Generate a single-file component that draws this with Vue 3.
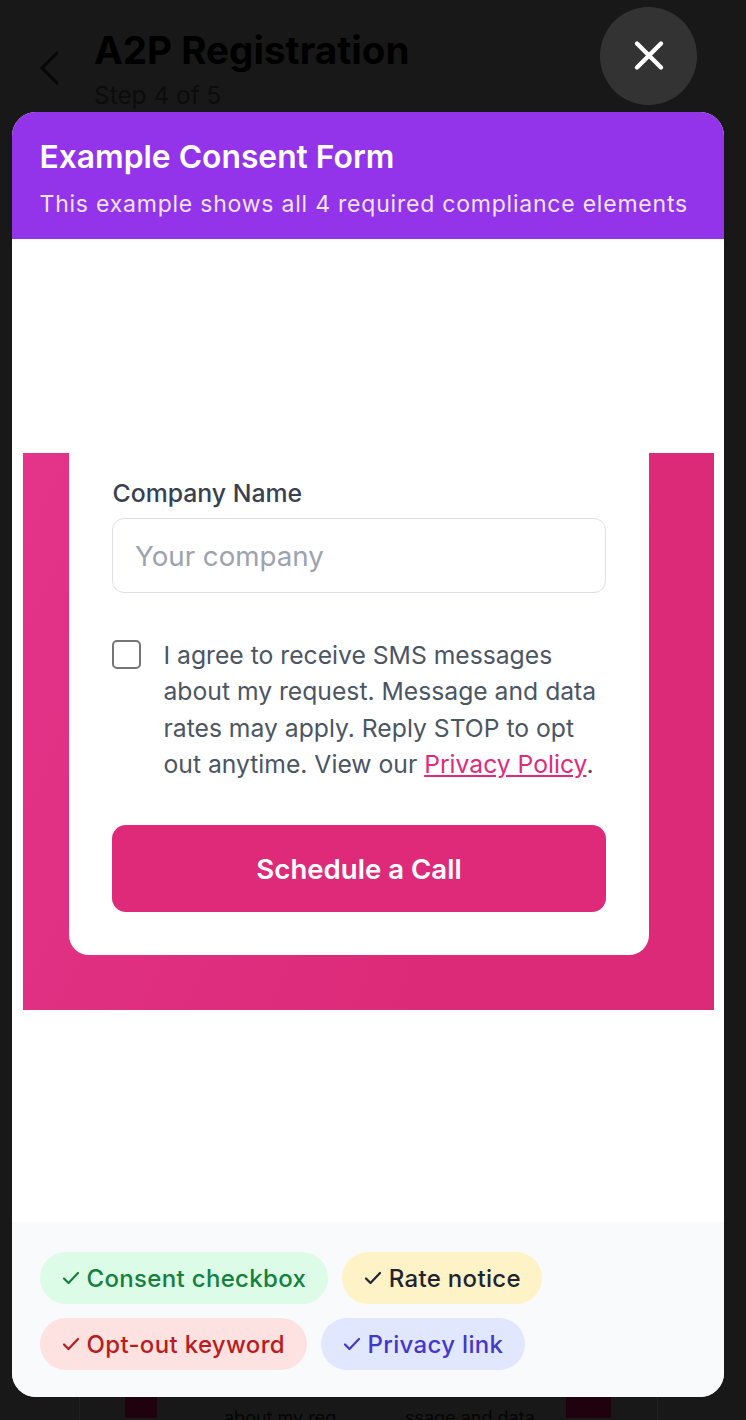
<script setup>
const chips = [
  { label: 'Consent checkbox', tone: 'green' },
  { label: 'Rate notice', tone: 'yellow' },
  { label: 'Opt-out keyword', tone: 'red' },
  { label: 'Privacy link', tone: 'blue' },
]
</script>

<template>
  <div class="screen">
    <header class="page-head">
      <svg class="back" width="24" height="36" viewBox="0 0 24 36" fill="none">
        <path d="M19 3 L4 18 L19 33" stroke="#060606" stroke-width="3" stroke-linecap="round" stroke-linejoin="round" />
      </svg>
      <div class="page-titles">
        <h1>A2P Registration</h1>
        <p>Step 4 of 5</p>
      </div>
    </header>

    <div class="peek">
      <div class="peek-block left"></div>
      <span class="peek-text">about my req</span>
      <span class="peek-text second">ssage and data</span>
      <div class="peek-block right"></div>
    </div>

    <button class="close" aria-label="Close">
      <svg width="34" height="34" viewBox="0 0 34 34" fill="none">
        <path d="M5 4.5 L29 28.5 M29 4.5 L5 28.5" stroke="#fff" stroke-width="4.4" stroke-linecap="round" />
      </svg>
    </button>

    <section class="modal">
      <div class="modal-head">
        <h2>Example Consent Form</h2>
        <p>This example shows all 4 required compliance elements</p>
      </div>

      <div class="modal-body">
        <div class="pink">
          <div class="card">
            <label class="field-label">Company Name</label>
            <div class="input">Your company</div>
            <div class="consent">
              <span class="box"></span>
              <p>I agree to receive SMS messages about my request. Message and data rates may apply. Reply STOP to opt out anytime. View our <a>Privacy Policy</a>.</p>
            </div>
            <button class="cta">Schedule a Call</button>
          </div>
        </div>
      </div>

      <div class="modal-foot">
        <span v-for="c in chips" :key="c.label" class="chip" :class="c.tone">
          <svg width="18" height="14" viewBox="0 0 18 14" fill="none">
            <path d="M2 7.5 L6.5 12 L16 2" stroke="currentColor" stroke-width="2.2" stroke-linecap="round" stroke-linejoin="round" />
          </svg>
          {{ c.label }}
        </span>
      </div>
    </section>
  </div>
</template>

<style>
html, body { margin: 0; background: #181818; }
</style>

<style scoped>
.screen {
  position: relative;
  width: 746px;
  height: 1420px;
  overflow: hidden;
  background: #181818;
  font-family: Inter, "Liberation Sans", sans-serif;
}
.page-head {
  display: flex;
  gap: 32px;
  padding: 28px 0 0 38px;
}
.back { margin-top: 22px; }
.page-titles h1 {
  margin: 0;
  font-size: 38.6px;
  line-height: 44px;
  font-weight: 700;
  color: #000;
}
.page-titles p {
  margin: 8px 0 0;
  font-size: 24.4px;
  line-height: 30px;
  color: #0c0c0c;
}
.peek {
  position: absolute;
  left: 79px;
  right: 88px;
  top: 1390px;
  height: 30px;
  border-left: 1px solid #222;
  border-right: 1px solid #222;
}
.peek-block {
  position: absolute;
  top: 0;
  height: 28px;
  background: #1f020e;
}
.peek-block.left { left: 45px; width: 32px; }
.peek-block.right { left: 486px; width: 45px; }
.peek-text {
  position: absolute;
  left: 144px;
  top: 17px;
  font-size: 18px;
  line-height: 22px;
  color: #050505;
}
.peek-text.second { left: 325px; }

.close {
  position: absolute;
  left: 600px;
  top: 7px;
  width: 97px;
  height: 98px;
  border: 0;
  border-radius: 50%;
  background: #333;
  display: flex;
  align-items: center;
  justify-content: center;
  padding: 0;
}
.modal {
  position: absolute;
  left: 12px;
  top: 112px;
  width: 712px;
  height: 1285px;
  border-radius: 24px;
  overflow: hidden;
  background: #fff;
  display: flex;
  flex-direction: column;
}
.modal-head {
  height: 127px;
  box-sizing: border-box;
  padding: 26px 28px 0 27.5px;
  background: #9333ea;
  color: #fff;
}
.modal-head h2 {
  margin: 0;
  font-size: 31.8px;
  line-height: 38px;
  font-weight: 600;
}
.modal-head p {
  margin: 13px 0 0;
  font-size: 23px;
  line-height: 30px;
  letter-spacing: 0.78px;
  white-space: nowrap;
  color: #f0e4fc;
}
.modal-body {
  flex: 1;
  padding: 214px 10px 0 11px;
}
.pink {
  height: 557px;
  box-sizing: border-box;
  padding: 0 65px 0 46px;
  background: linear-gradient(115deg, #e3348a, #dc2a78 70%);
}
.card {
  height: 502px;
  box-sizing: border-box;
  padding: 25px 43px 0;
  background: #fff;
  border-radius: 0 0 20px 20px;
}
.field-label {
  display: block;
  padding-left: 0.5px;
  font-size: 24.8px;
  line-height: 30px;
  font-weight: 500;
  color: #374151;
}
.input {
  margin-top: 10px;
  height: 75px;
  box-sizing: border-box;
  padding: 0 22px;
  display: flex;
  align-items: center;
  border: 1.5px solid #dcdfe3;
  border-radius: 12px;
  font-size: 27.7px;
  color: #9ca3af;
}
.consent {
  display: flex;
  gap: 22.5px;
  margin-top: 44px;
}
.box {
  flex: none;
  width: 29px;
  height: 29px;
  margin-top: 3px;
  box-sizing: border-box;
  border: 2px solid #767676;
  border-radius: 5px;
}
.consent p {
  margin: 0;
  font-size: 24.7px;
  line-height: 36.3px;
  color: #4b5563;
}
.consent a {
  color: #df2b7d;
  text-decoration: underline;
}
.cta {
  display: block;
  width: 100%;
  height: 87px;
  margin-top: 43px;
  border: 0;
  border-radius: 14px;
  background: #de2a78;
  color: #fff;
  font-family: inherit;
  font-size: 27.6px;
  font-weight: 600;
}
.modal-foot {
  height: 175px;
  box-sizing: border-box;
  padding: 30px 28px 0 27.5px;
  background: #f9fafc;
  display: flex;
  flex-wrap: wrap;
  align-content: flex-start;
  gap: 14px;
}
.chip {
  display: inline-flex;
  align-items: center;
  gap: 7px;
  height: 52px;
  box-sizing: border-box;
  padding: 0 21.5px 0 22px;
  border-radius: 26px;
  font-size: 24px;
  font-weight: 500;
  letter-spacing: 0.33px;
}
.green { background: #dcfce7; color: #15803d; }
.yellow { background: #fef3c7; color: #1f2430; }
.red { background: #fee2e2; color: #b91c1c; }
.blue { background: #e0e7ff; color: #4338ca; }
</style>
